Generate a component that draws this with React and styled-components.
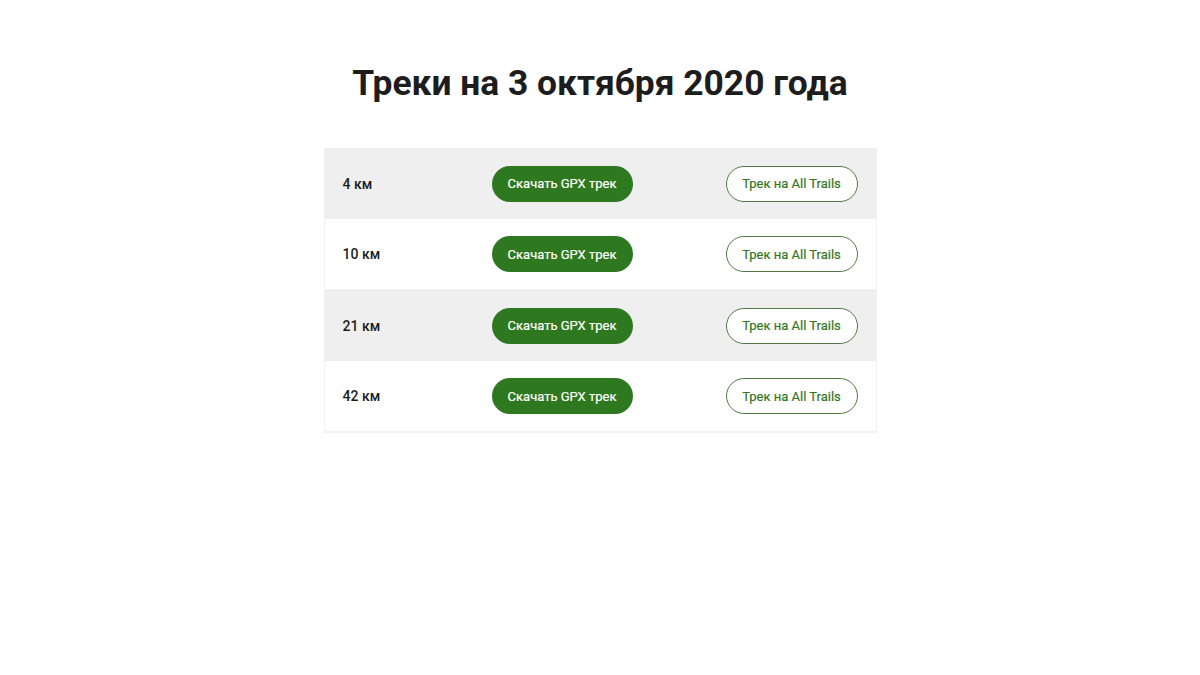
import React from "react";
import styled, { createGlobalStyle } from "styled-components";

const Global = createGlobalStyle`
  html, body { margin: 0; padding: 0; background: #fff; }
  body { font-family: Roboto, "Noto Sans", Arial, sans-serif; color: #1d1d1d; }
`;

const Page = styled.main`
  display: flex;
  flex-direction: column;
  align-items: center;
  padding-top: 59px;
`;

const Title = styled.h1`
  margin: 0 0 41px;
  font-size: 35.4px;
  line-height: 48px;
  font-weight: 700;
  color: #1d1d1d;
  letter-spacing: 0;
`;

const Table = styled.div`
  width: 553px;
  border: 1px solid #f2f2f2;
  border-top: none;
  box-sizing: border-box;
`;

const Row = styled.div`
  display: grid;
  grid-template-columns: 149px 141px 1fr;
  align-items: center;
  height: 71px;
  padding: 0 18px;
  background: ${(p) => (p.$shaded ? "#efefef" : "#fff")};
  border-bottom: ${(p) => (p.$shaded ? "none" : "1px solid #f2f2f2")};
  box-sizing: border-box;
`;

const Label = styled.span`
  font-size: 14px;
  font-weight: 500;
  color: #1d1d1d;
`;

const Pill = styled.a`
  display: inline-flex;
  align-items: center;
  justify-content: center;
  height: 36px;
  box-sizing: border-box;
  border-radius: 18px;
  font-size: 13px;
  font-weight: 400;
  text-decoration: none;
  white-space: nowrap;
  -webkit-text-stroke: 0.2px currentColor;
`;

const Solid = styled(Pill)`
  width: 141px;
  background: #2e781f;
  color: #fff;
`;

const Outline = styled(Pill)`
  justify-self: end;
  width: 132px;
  background: #fff;
  border: 1px solid #4f7a44;
  color: #34771f;
`;

const rows = ["4 км", "10 км", "21 км", "42 км"];

export default function App() {
  return (
    <>
      <Global />
      <Page>
        <Title>Треки на 3 октября 2020 года</Title>
        <Table>
          {rows.map((r, i) => (
            <Row key={r} $shaded={i % 2 === 0}>
              <Label>{r}</Label>
              <Solid href="#">Скачать GPX трек</Solid>
              <Outline href="#">Трек на All Trails</Outline>
            </Row>
          ))}
        </Table>
      </Page>
    </>
  );
}
